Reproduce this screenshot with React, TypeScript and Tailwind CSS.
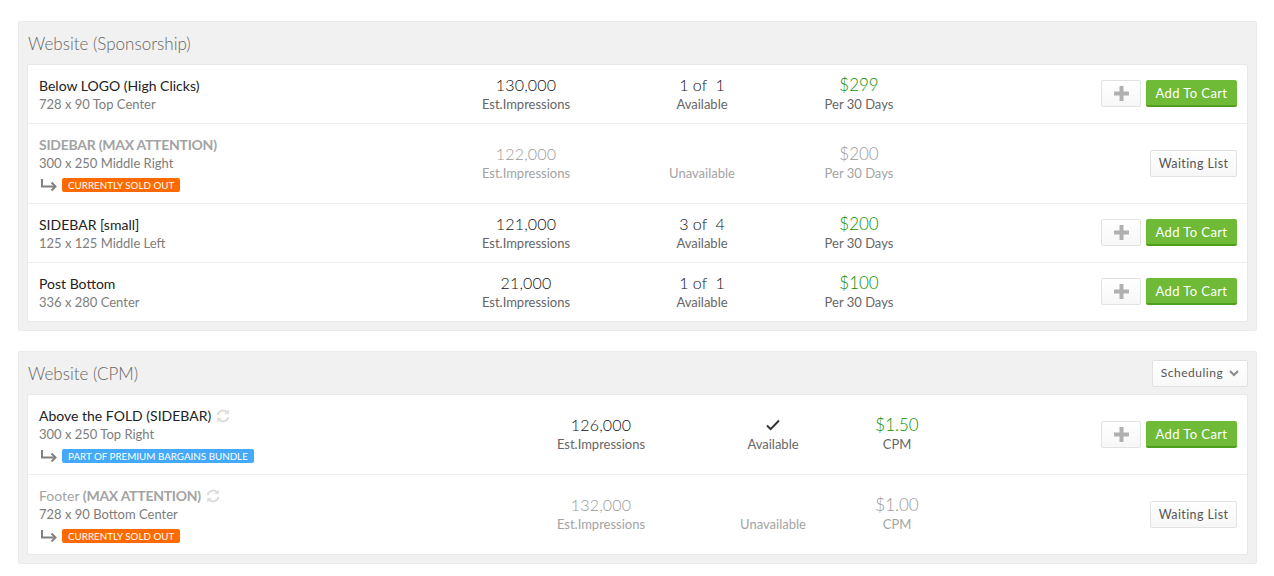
import React from "react";

const Chevron = () => (
  <svg width="10" height="7" viewBox="0 0 10 7" fill="none" stroke="#8a8a8a" strokeWidth="2"><path d="M1 1l4 4 4-4" /></svg>
);
const Elbow = () => (
  <svg width="17" height="12" viewBox="0 0 17 12" fill="none" stroke="#808080" strokeWidth="2"><path d="M2 0v7.500h12" /><path d="M11.500 3.500l4 4-4 4" /></svg>
);
const Sync = () => (
  <svg width="14" height="14" viewBox="0 0 14 14" fill="none" stroke="#dcdcdc" strokeWidth="2"><path d="M1.600 6A5.500 5.500 0 0 1 11 3.400" /><path d="M12.400 8A5.500 5.500 0 0 1 3 10.600" /><path d="M12.600 0.800v4h-4z" fill="#dcdcdc" strokeWidth="0.5" /><path d="M1.400 13.200v-4h4z" fill="#dcdcdc" strokeWidth="0.5" /></svg>
);
const Check = () => (
  <svg width="14" height="12" viewBox="0 0 14 12" fill="none" stroke="#333" strokeWidth="2"><path d="M1 6.500l3.600 3.600L13 1.500" /></svg>
);
const Plus = () => (
  <svg width="15" height="15" viewBox="0 0 15 15" fill="#b0b0b0"><path d="M5.500 0h4v5.500h5.500v4H9.500v5.500h-4V9.500H0v-4h5.500z" /></svg>
);

const Badge = ({ text, blue }: { text: string; blue?: boolean }) => (
  <div className="flex items-center gap-[5px] mt-[6px] h-[14px] ml-[1px]">
    <Elbow />
    <span className={`h-[14px] leading-[14px] rounded-[2px] px-[6px] text-[9.800px] text-white whitespace-nowrap ${blue ? "bg-[#45a9f9]" : "bg-[#ff6a00]"}`}>{text}</span>
  </div>
);

const Actions = ({ on, tall }: { on: boolean; tall: boolean }) =>
  on ? (
    <div className={`flex gap-[5px] ${tall ? "" : "-mt-[1px]"}`}>
      <button className="w-[40px] h-[27px] flex items-center justify-center bg-gradient-to-b from-white to-[#f7f7f7] border border-[#e2e2e2] rounded-[2px]"><Plus /></button>
      <button className="w-[91px] h-[27px] pt-[2px] bg-[#6fba37] border-b-2 border-b-[#4ea01c] rounded-[2px] text-white text-[13px] tracking-[0.4px]">Add To Cart</button>
    </div>
  ) : (
    <button className="w-[87px] h-[27px] pt-[1px] bg-gradient-to-b from-white to-[#f7f7f7] border border-[#e2e2e2] rounded-[2px] text-[#555] text-[12.500px] tracking-[0.4px]">Waiting List</button>
  );

type R = {
  title: React.ReactNode; sub: string; badge?: string; blue?: boolean; sync?: boolean;
  imp: string; avail?: React.ReactNode; availLabel: string; price: string; unit: string; on: boolean;
};

const Stat = ({ top, bottom, on, color, size, tall }: { top?: React.ReactNode; bottom: string; on: boolean; color: string; size: string; tall: boolean }) => (
  <div className={`flex flex-col items-center justify-center ${tall ? "-mt-[1px]" : ""}`}>
    <div className={`h-[20px] ${size} font-light leading-[20px] whitespace-pre flex items-center ${color}`}>{top}</div>
    <div className={`text-[13px] leading-[18px] ${on ? "text-[#666]" : "text-[#a3a3a3]"}`}>{bottom}</div>
  </div>
);

const Row = ({ r, cols, last }: { r: R; cols: string; last?: boolean }) => {
  const tall = !!r.badge;
  const h = tall ? (last ? "h-[79px]" : "h-[80px]") : last ? "h-[58px]" : "h-[59px]";
  const mute = "text-[#9a9a9a]";
  return (
    <div className={`grid ${cols} items-center ${h} ${last ? "" : "border-b border-[#eeeeee]"}`}>
      <div className="pl-[11px]">
        <div className={`flex items-center gap-[5px] text-[14px] leading-[19px] ${r.on ? "text-[#222]" : "text-[#a3a3a3]"}`}>
          <span>{r.title}</span>{r.sync && <Sync />}
        </div>
        <div className="text-[13px] leading-[18px] text-[#7d7d7d]">{r.sub}</div>
        {r.badge && <Badge text={r.badge} blue={r.blue} />}
      </div>
      <Stat tall={tall} top={r.imp} bottom="Est.Impressions" on={r.on} size="text-[16px] tracking-[0.2px]" color={r.on ? "text-[#111]" : mute} />
      <Stat tall={tall} top={r.avail} bottom={r.availLabel} on={r.on} size="text-[16px]" color={r.on ? "text-[#111]" : mute} />
      <Stat tall={tall} top={r.price} bottom={r.unit} on={r.on} size="text-[17px]" color={r.on ? "text-[#0f8f00]" : mute} />
      <div className="flex justify-end pr-[10px]"><Actions on={r.on} tall={tall} /></div>
    </div>
  );
};

const Section = ({ title, rows, cols, action, className }: { title: string; rows: R[]; cols: string; action?: boolean; className?: string }) => (
  <section className={`ml-[18px] mr-[17px] bg-[#f1f1f1] border border-[#ebebeb] rounded-[2px] px-[8px] pb-[8px] ${className ?? ""}`}>
    <div className="h-[42px] flex items-center justify-between">
      <h2 className="text-[17px] font-light text-[#666] pl-[1px] pt-[2px]">{title}</h2>
      {action && (
        <button className="w-[96px] h-[27px] flex items-center justify-center gap-[6px] bg-gradient-to-b from-white to-[#f8f8f8] border border-[#e2e2e2] rounded-[2px] text-[#555] text-[12px] tracking-[0.5px]">Scheduling <Chevron /></button>
      )}
    </div>
    <div className="bg-white border border-[#e8e8e8] rounded-[2px]">
      {rows.map((r, i) => <Row key={i} r={r} cols={cols} last={i === rows.length - 1} />)}
    </div>
  </section>
);

const sponsor: R[] = [
  { title: "Below LOGO (High Clicks)", sub: "728 x 90 Top Center", imp: "130,000", avail: "1 of  1", availLabel: "Available", price: "$299", unit: "Per 30 Days", on: true },
  { title: <b className="font-bold tracking-[-0.26px]">SIDEBAR (MAX ATTENTION)</b>, sub: "300 x 250 Middle Right", badge: "CURRENTLY SOLD OUT", imp: "122,000", availLabel: "Unavailable", price: "$200", unit: "Per 30 Days", on: false },
  { title: "SIDEBAR [small]", sub: "125 x 125 Middle Left", imp: "121,000", avail: "3 of  4", availLabel: "Available", price: "$200", unit: "Per 30 Days", on: true },
  { title: "Post Bottom", sub: "336 x 280 Center", imp: "21,000", avail: "1 of  1", availLabel: "Available", price: "$100", unit: "Per 30 Days", on: true },
];
const cpm: R[] = [
  { title: "Above the FOLD (SIDEBAR)", sub: "300 x 250 Top Right", badge: "PART OF PREMIUM BARGAINS BUNDLE", blue: true, sync: true, imp: "126,000", avail: <Check />, availLabel: "Available", price: "$1.50", unit: "CPM", on: true },
  { title: <>Footer <b className="font-bold tracking-[-0.26px]">(MAX ATTENTION)</b></>, sub: "728 x 90 Bottom Center", badge: "CURRENTLY SOLD OUT", sync: true, imp: "132,000", availLabel: "Unavailable", price: "$1.00", unit: "CPM", on: false },
];

export default function App() {
  return (
    <div className="bg-white h-[576px] pt-[21px] overflow-hidden font-['Lato','Open_Sans',sans-serif]">
      <Section title="Website (Sponsorship)" rows={sponsor} cols="grid-cols-[408px_180px_172px_142px_1fr]" />
      <Section title="Website (CPM)" rows={cpm} cols="grid-cols-[483px_180px_164px_84px_1fr]" action className="mt-[20px]" />
    </div>
  );
}
